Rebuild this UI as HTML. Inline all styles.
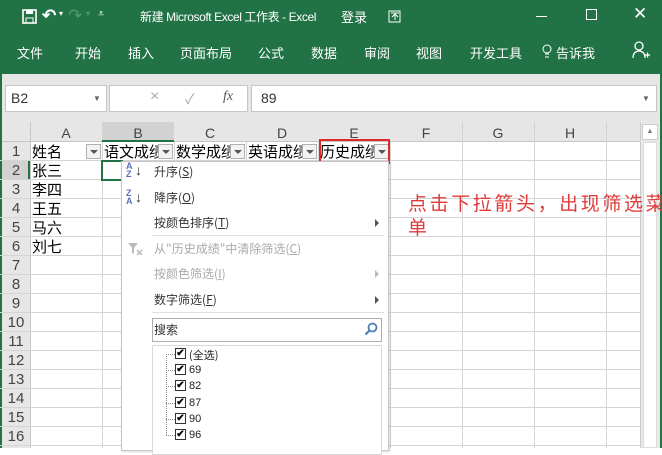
<!DOCTYPE html>
<html><head><meta charset="utf-8"><style>
*{margin:0;padding:0;box-sizing:border-box}
body{width:662px;height:448px;overflow:hidden;background:#fff;font-family:"Liberation Sans","Noto Sans CJK SC",sans-serif;position:relative}
.a{position:absolute;white-space:nowrap}
.g{color:#fff;font-size:13px}
.hl{position:absolute;height:1px;background:#d4d4d4}
.vl{position:absolute;width:1px;background:#d4d4d4}
.ch{position:absolute;top:124px;height:18px;font-size:14px;color:#444;text-align:center;line-height:18px}
.rn{position:absolute;left:2px;width:28px;font-size:15px;color:#444;text-align:center;line-height:19px;height:19px}
.cell{position:absolute;font-size:15px;color:#000;line-height:19px;height:19px;font-family:"Noto Sans CJK SC",sans-serif;overflow:hidden}
.dd{position:absolute;width:15px;height:15px;border:1px solid #b0b0b0;background:#f3f3f3}
.dd:after{content:"";position:absolute;left:3px;top:5px;border-left:4px solid transparent;border-right:4px solid transparent;border-top:4px solid #555}
.mi{position:absolute;left:154px;font-size:12px;color:#333;font-family:"Noto Sans CJK SC",sans-serif}
.dis{color:#aaa}
.ar{position:absolute;left:375px;width:0;height:0;border-top:4px solid transparent;border-bottom:4px solid transparent;border-left:4px solid #555}
.cb{position:absolute;left:175px;width:11px;height:11px;border:1px solid #333;background:#fff;font-size:10px;line-height:9px;text-align:center;font-weight:bold}
.cl{position:absolute;left:189px;font-size:11px;color:#222}
</style></head><body>
<div class="a" style="left:0;top:0;width:662px;height:74px;background:#217346"></div>
<svg class="a" style="left:22px;top:9px" width="16" height="16"><rect x="1" y="1" width="13" height="13" fill="none" stroke="#fff" stroke-width="1.6"/><rect x="4" y="1" width="7" height="4" fill="#fff"/><rect x="4" y="9" width="7" height="5" fill="none" stroke="#fff"/></svg>
<div class="a g" style="left:42px;top:6px;font-size:17px;font-weight:bold">↶</div>
<div class="a g" style="left:59px;top:9px;font-size:8px">▾</div>
<div class="a" style="left:68px;top:6px;font-size:17px;color:#4e9a6e">↷</div>
<div class="a" style="left:86px;top:9px;font-size:8px;color:#4e9a6e">▾</div>
<div class="a g" style="left:98px;top:8px;font-size:11px">⩡</div>
<div class="a g" style="left:140px;top:8px;font-size:12px;letter-spacing:-0.4px">新建 Microsoft Excel 工作表 - Excel</div>
<div class="a g" style="left:341px;top:7px">登录</div>
<svg class="a" style="left:388px;top:10px" width="14" height="13"><rect x="1" y="1" width="11" height="11" fill="none" stroke="#fff"/><path d="M4 7l3-3 3 3M7 4v6M3 3h8" stroke="#fff" fill="none"/></svg>
<div class="a" style="left:536px;top:16px;width:11px;height:1px;background:#fff"></div>
<div class="a" style="left:586px;top:9px;width:11px;height:11px;border:1px solid #fff"></div>
<div class="a g" style="left:633px;top:4px;font-size:17px">✕</div>
<div class="a g" style="left:17px;top:43px">文件</div>
<div class="a g" style="left:75px;top:43px">开始</div>
<div class="a g" style="left:128px;top:43px">插入</div>
<div class="a g" style="left:180px;top:43px">页面布局</div>
<div class="a g" style="left:258px;top:43px">公式</div>
<div class="a g" style="left:311px;top:43px">数据</div>
<div class="a g" style="left:364px;top:43px">审阅</div>
<div class="a g" style="left:416px;top:43px">视图</div>
<div class="a g" style="left:470px;top:43px">开发工具</div>
<svg class="a" style="left:542px;top:44px" width="10" height="16"><circle cx="5" cy="5" r="4" fill="none" stroke="#fff"/><path d="M3 10h4M3 13h4" stroke="#fff"/></svg>
<div class="a g" style="left:556px;top:43px">告诉我</div>
<svg class="a" style="left:632px;top:40px" width="18" height="20"><circle cx="7" cy="6" r="4" fill="none" stroke="#fff" stroke-width="1.3"/><path d="M1 18c0-5 3-7 6-7s6 2 6 7M13 15h5M15.5 12.5v5" stroke="#fff" fill="none" stroke-width="1.3"/></svg>
<div class="a" style="left:0;top:74px;width:662px;height:48px;background:#e6e6e6"></div>
<div class="a" style="left:5px;top:85px;width:102px;height:27px;background:#fff;border:1px solid #c6c6c6"></div>
<div class="a" style="left:11px;top:90px;font-size:14px;color:#333">B2</div>
<div class="a" style="left:93px;top:94px;font-size:8px;color:#666">▼</div>
<div class="a" style="left:120px;top:90px;font-size:12px;color:#aaa">⁝</div>
<div class="a" style="left:109px;top:85px;width:139px;height:27px;background:#fff;border:1px solid #c6c6c6"></div>
<div class="a" style="left:150px;top:88px;font-size:16px;color:#aaa">×</div>
<div class="a" style="left:185px;top:89px;font-size:14px;color:#aaa">✓</div>
<div class="a" style="left:223px;top:89px;font-size:14px;color:#555;font-style:italic;font-family:'Liberation Serif',serif">fx</div>
<div class="a" style="left:251px;top:85px;width:406px;height:27px;background:#fff;border:1px solid #c6c6c6"></div>
<div class="a" style="left:261px;top:90px;font-size:14px;color:#333">89</div>
<div class="a" style="left:642px;top:94px;font-size:8px;color:#666">▼</div>
<div class="a" style="left:0;top:122px;width:662px;height:326px;background:#fff"></div>
<div class="a" style="left:0;top:122px;width:30px;height:326px;background:#e6e6e6"></div>
<div class="a" style="left:0;top:122px;width:640px;height:20px;background:#e6e6e6;border-bottom:1px solid #c6c6c6"></div>
<div class="a" style="left:102px;top:122px;width:72px;height:20px;background:#d2d2d2;border-bottom:2px solid #217346"></div>
<div class="a" style="left:0;top:161px;width:30px;height:19px;background:#d2d2d2;border-right:2px solid #217346"></div>
<div class="a" style="left:0;top:74px;width:2px;height:374px;background:#217346"></div>
<div class="a" style="left:660px;top:74px;width:2px;height:374px;background:#217346"></div>
<div class="a" style="left:640px;top:122px;width:20px;height:326px;background:#e8e8e8;border-left:1px solid #ccc"></div>
<div class="a" style="left:642px;top:124px;width:16px;height:16px;background:#fff;border:1px solid #ccc;font-size:7px;color:#777;text-align:center;line-height:14px">▲</div>
<div class="a" style="left:643px;top:142px;width:14px;height:306px;background:#fff;border:1px solid #ddd"></div>
<div class="vl" style="left:30px;top:122px;height:326px;background:#c6c6c6"></div>
<div class="vl" style="left:102px;top:142px;height:306px"></div>
<div class="vl" style="left:174px;top:142px;height:306px"></div>
<div class="vl" style="left:246px;top:142px;height:306px"></div>
<div class="vl" style="left:318px;top:142px;height:306px"></div>
<div class="vl" style="left:390px;top:142px;height:306px"></div>
<div class="vl" style="left:462px;top:122px;height:326px"></div>
<div class="vl" style="left:534px;top:122px;height:326px"></div>
<div class="vl" style="left:606px;top:122px;height:326px"></div>
<div class="hl" style="left:0;top:160px;width:640px"></div>
<div class="hl" style="left:0;top:179px;width:640px"></div>
<div class="hl" style="left:0;top:198px;width:640px"></div>
<div class="hl" style="left:0;top:217px;width:640px"></div>
<div class="hl" style="left:0;top:236px;width:640px"></div>
<div class="hl" style="left:0;top:255px;width:640px"></div>
<div class="hl" style="left:0;top:274px;width:640px"></div>
<div class="hl" style="left:0;top:293px;width:640px"></div>
<div class="hl" style="left:0;top:312px;width:640px"></div>
<div class="hl" style="left:0;top:331px;width:640px"></div>
<div class="hl" style="left:0;top:350px;width:640px"></div>
<div class="hl" style="left:0;top:369px;width:640px"></div>
<div class="hl" style="left:0;top:388px;width:640px"></div>
<div class="hl" style="left:0;top:407px;width:640px"></div>
<div class="hl" style="left:0;top:426px;width:640px"></div>
<div class="hl" style="left:0;top:445px;width:640px"></div>
<div class="ch" style="left:30px;width:72px">A</div>
<div class="ch" style="left:102px;width:72px">B</div>
<div class="ch" style="left:174px;width:72px">C</div>
<div class="ch" style="left:246px;width:72px">D</div>
<div class="ch" style="left:318px;width:72px">E</div>
<div class="ch" style="left:390px;width:72px">F</div>
<div class="ch" style="left:462px;width:72px">G</div>
<div class="ch" style="left:534px;width:72px">H</div>
<div class="rn" style="top:142px">1</div><div class="rn" style="top:161px">2</div><div class="rn" style="top:180px">3</div><div class="rn" style="top:199px">4</div><div class="rn" style="top:218px">5</div><div class="rn" style="top:237px">6</div><div class="rn" style="top:256px">7</div><div class="rn" style="top:275px">8</div><div class="rn" style="top:294px">9</div><div class="rn" style="top:313px">10</div><div class="rn" style="top:332px">11</div><div class="rn" style="top:351px">12</div><div class="rn" style="top:370px">13</div><div class="rn" style="top:389px">14</div><div class="rn" style="top:408px">15</div><div class="rn" style="top:427px">16</div>
<div class="cell" style="left:32px;top:142px;width:68px">姓名</div>
<div class="cell" style="left:104px;top:142px;width:70px">语文成绩</div>
<div class="cell" style="left:176px;top:142px;width:70px">数学成绩</div>
<div class="cell" style="left:248px;top:142px;width:70px">英语成绩</div>
<div class="cell" style="left:320px;top:142px;width:70px">历史成绩</div>
<div class="dd" style="left:86px;top:144px"></div>
<div class="dd" style="left:158px;top:144px"></div>
<div class="dd" style="left:230px;top:144px"></div>
<div class="dd" style="left:302px;top:144px"></div>
<div class="dd" style="left:374px;top:144px"></div>
<div class="a" style="left:319px;top:139px;width:71px;height:25px;border:2px solid #e02a2a"></div>
<div class="cell" style="left:32px;top:161px">张三</div>
<div class="cell" style="left:32px;top:180px">李四</div>
<div class="cell" style="left:32px;top:199px">王五</div>
<div class="cell" style="left:32px;top:218px">马六</div>
<div class="cell" style="left:32px;top:237px">刘七</div>
<div class="a" style="left:101px;top:160px;width:22px;height:21px;border:2px solid #217346;border-right:none"></div>
<div class="a" style="left:121px;top:161px;width:268px;height:290px;background:#fff;border:1px solid #c6c6c6;box-shadow:1px 1px 2px rgba(0,0,0,.15)"></div>
<div class="a" style="left:126px;top:162px;font-size:9px;line-height:8px;color:#5b6fb5;font-weight:bold">A<br>Z</div>
<div class="a" style="left:135px;top:162px;font-size:14px;color:#333">↓</div>
<div class="a" style="left:126px;top:189px;font-size:9px;line-height:8px;color:#5b6fb5;font-weight:bold">Z<br>A</div>
<div class="a" style="left:135px;top:189px;font-size:14px;color:#333">↓</div>
<div class="mi" style="top:163px">升序(<u>S</u>)</div>
<div class="mi" style="top:189px">降序(<u>O</u>)</div>
<div class="mi" style="top:214px">按颜色排序(<u>T</u>)</div>
<div class="ar" style="top:219px"></div>
<div class="a" style="left:152px;top:235px;width:232px;height:1px;background:#e0e0e0"></div>
<svg class="a" style="left:127px;top:242px" width="16" height="14"><path d="M1 1h10L7 6v5L5 12V6z" fill="#bbb"/><path d="M10 8l5 5M15 8l-5 5" stroke="#bbb" stroke-width="1.5"/></svg>
<div class="mi dis" style="top:240px">从"历史成绩"中清除筛选(<u>C</u>)</div>
<div class="mi dis" style="top:265px">按颜色筛选(<u>I</u>)</div>
<div class="ar" style="top:270px;border-left-color:#bbb"></div>
<div class="mi" style="top:291px">数字筛选(<u>F</u>)</div>
<div class="ar" style="top:296px"></div>
<div class="a" style="left:152px;top:312px;width:232px;height:1px;background:#e0e0e0"></div>
<div class="a" style="left:152px;top:318px;width:230px;height:24px;border:1px solid #adadad;background:#fff"></div>
<div class="mi" style="left:154px;top:321px">搜索</div>
<svg class="a" style="left:364px;top:322px" width="14" height="14"><circle cx="8.5" cy="5.5" r="4" fill="none" stroke="#4a7fb5" stroke-width="1.8"/><path d="M5.5 8.5L1.5 12.5" stroke="#4a7fb5" stroke-width="2.2"/></svg>
<div class="a" style="left:152px;top:345px;width:230px;height:110px;border:1px solid #d8d8d8;background:#fff"></div>
<div class="a" style="left:166px;top:354px;width:1px;height:81px;border-left:1px dotted #888"></div>
<div class="a" style="left:166px;top:354px;width:9px;border-top:1px dotted #888"></div>
<div class="a" style="left:166px;top:370px;width:9px;border-top:1px dotted #888"></div>
<div class="a" style="left:166px;top:386px;width:9px;border-top:1px dotted #888"></div>
<div class="a" style="left:166px;top:403px;width:9px;border-top:1px dotted #888"></div>
<div class="a" style="left:166px;top:419px;width:9px;border-top:1px dotted #888"></div>
<div class="a" style="left:166px;top:435px;width:9px;border-top:1px dotted #888"></div>
<div class="cb" style="top:348px">✔</div><div class="cl" style="top:347px;font-family:'Noto Sans CJK SC',sans-serif">(全选)</div>
<div class="cb" style="top:364px">✔</div><div class="cl" style="top:364px">69</div>
<div class="cb" style="top:380px">✔</div><div class="cl" style="top:380px">82</div>
<div class="cb" style="top:397px">✔</div><div class="cl" style="top:397px">87</div>
<div class="cb" style="top:413px">✔</div><div class="cl" style="top:413px">90</div>
<div class="cb" style="top:429px">✔</div><div class="cl" style="top:429px">96</div>
<div class="a" style="left:408px;top:191px;font-size:19px;letter-spacing:2.6px;color:#e03a3a;font-family:'Noto Sans CJK SC',sans-serif;line-height:24px">点击下拉箭头，出现筛选菜<br>单</div>
</body></html>
